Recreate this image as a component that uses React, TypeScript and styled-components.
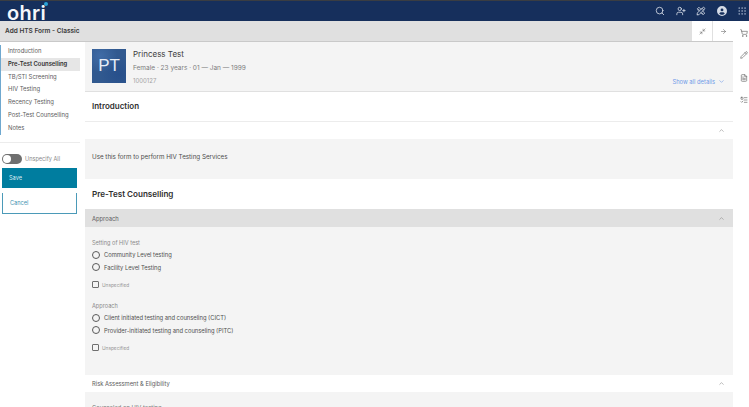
import React from 'react';
import styled, { createGlobalStyle } from 'styled-components';
import {
  ArrowRight,
  ChevronDown,
  ChevronUp,
  FileText,
  Grip,
  ListTodo,
  Minimize2,
  Pencil,
  Search,
  ShoppingCart,
  UserPlus,
} from 'lucide-react';
import { FaCircleUser } from 'react-icons/fa6';
import { TbTools } from 'react-icons/tb';

const GlobalStyle = createGlobalStyle`
  html, body {
    margin: 0;
    padding: 0;
    background: #fff;
    overflow: hidden;
    font-family: 'Inter', 'Liberation Sans', sans-serif;
    color: #393939;
  }
  * { box-sizing: border-box; }
`;

const Page = styled.div`
  width: 749px;
  height: 407px;
  display: flex;
  flex-direction: column;
  overflow: hidden;
`;

const TopBar = styled.header`
  height: 21px;
  flex: none;
  background: #162f5c;
  border-top: 1px solid #3a3d42;
  display: flex;
  align-items: center;
  justify-content: space-between;
  padding: 0 2px 0 7px;
`;

const Logo = styled.div`
  position: relative;
  color: #f4f7fb;
  font-family: 'Inter', sans-serif;
  font-size: 20px;
  font-weight: 600;
  letter-spacing: 0.3px;
  line-height: 24px;
  height: 20px;
  width: 41px;
`;

const LogoDot = styled.span`
  position: absolute;
  right: 0;
  top: 1px;
  width: 4px;
  height: 4px;
  border-radius: 50%;
  background: #2aa3d6;
`;

const TopIcons = styled.nav`
  display: flex;
  align-items: center;
  gap: 10.5px;
  color: #d5dbe6;
`;

const TitleBar = styled.div`
  height: 21px;
  flex: none;
  background: #e0e0e0;
  border-bottom: 1px solid #c9c9c9;
  display: flex;
  align-items: center;
  justify-content: space-between;
  padding-left: 5px;
  margin-right: 16px;
`;

const FormTitle = styled.span`
  font-size: 6.5px;
  font-weight: 600;
  color: #3a3a3a;
`;

const TitleActions = styled.div`
  display: flex;
  height: 100%;
`;

const TitleButton = styled.div`
  width: 20px;
  margin-left: 1px;
  background: #fff;
  color: #6f6f6f;
  display: flex;
  align-items: center;
  justify-content: center;
`;

const Body = styled.div`
  flex: 1;
  min-height: 0;
  display: flex;
`;

const Sidebar = styled.aside`
  width: 85px;
  flex: none;
  padding-top: 3px;
  display: flex;
  flex-direction: column;
`;

const SideLinks = styled.ul`
  list-style: none;
  margin: 0 5px 0 0;
  padding: 0 0 7px;
  border-bottom: 1px solid #ececec;
`;

const SideLink = styled.li<{ $active?: boolean }>`
  height: 12.8px;
  line-height: 12px;
  padding-left: 7px;
  font-size: 5.9px;
  white-space: nowrap;
  border-left: 1px solid #6fa8cf;
  color: ${p => (p.$active ? '#2f2f2f' : '#5c5c5c')};
  font-weight: ${p => (p.$active ? 600 : 400)};
  background: ${p => (p.$active ? '#e6e6e6' : 'transparent')};
`;

const UnspecifyRow = styled.div`
  margin-top: 11px;
  height: 10px;
  padding-left: 2px;
  display: flex;
  align-items: center;
  gap: 3px;
  font-size: 5.6px;
  color: #8a8a8a;
`;

const ToggleTrack = styled.span`
  position: relative;
  width: 20px;
  height: 10px;
  border-radius: 5px;
  background: #6f6f6f;
`;

const ToggleKnob = styled.span`
  position: absolute;
  left: 1px;
  top: 1px;
  width: 8px;
  height: 8px;
  border-radius: 50%;
  background: #fff;
`;

const SaveButton = styled.div`
  margin: 4px 0 0 2px;
  width: 75px;
  height: 20px;
  padding-left: 7px;
  line-height: 20px;
  font-size: 5.6px;
  color: #dcecf2;
  background: #007d9f;
`;

const CancelButton = styled.div`
  margin: 5px 0 0 2px;
  width: 75px;
  height: 21px;
  padding-left: 7px;
  line-height: 20px;
  font-size: 5.6px;
  color: #3f93b0;
  background: #fff;
  border-left: 1px solid #4b9ab8;
  border-right: 1px solid #4b9ab8;
  border-bottom: 1px solid #4b9ab8;
`;

const Main = styled.main`
  width: 648px;
  flex: none;
  display: flex;
  flex-direction: column;
`;

const Banner = styled.section`
  height: 50px;
  flex: none;
  background: #f4f4f4;
  border-bottom: 1px solid #e0e0e0;
  padding: 7px 8px 0 7px;
  display: flex;
  gap: 7px;
  position: relative;
`;

const Avatar = styled.div`
  width: 34px;
  height: 34px;
  flex: none;
  background:
    radial-gradient(circle at 25% 20%, #3f6ba6 0, transparent 45%),
    radial-gradient(circle at 80% 75%, #274f8b 0, transparent 50%),
    #31598f;
  color: #e6edf7;
  font-size: 17px;
  text-align: center;
  line-height: 34px;
  font-family: 'Liberation Sans', sans-serif;
`;

const PatientInfo = styled.div`
  display: flex;
  flex-direction: column;
`;

const PatientName = styled.div`
  font-size: 8px;
  line-height: 11px;
  color: #3d3d3d;
`;

const PatientMeta = styled.div`
  font-size: 6.5px;
  line-height: 8px;
  margin-top: 4px;
  color: #7c7c7c;
`;

const PatientId = styled.div`
  font-size: 6px;
  line-height: 8px;
  margin-top: 5px;
  color: #a3a3a3;
`;

const ShowDetails = styled.div`
  position: absolute;
  right: 8px;
  bottom: 6px;
  display: flex;
  align-items: center;
  gap: 3px;
  font-size: 5.8px;
  color: #6f9ae8;
`;

const SectionTitle = styled.h2<{ $large?: boolean }>`
  margin: 0;
  flex: none;
  height: 30px;
  padding-left: 7px;
  line-height: ${p => (p.$large ? '30px' : '29px')};
  font-size: ${p => (p.$large ? '8.1px' : '8px')};
  font-weight: 600;
  color: #2f2f2f;
  border-bottom: ${p => (p.$large ? 'none' : '1px solid #ececec')};
`;

const AccordionHead = styled.div<{ $shaded?: boolean }>`
  flex: none;
  height: ${p => (p.$shaded ? '18px' : '17px')};
  padding: 0 8px 0 7px;
  display: flex;
  align-items: center;
  justify-content: space-between;
  font-size: 5.8px;
  color: #5c5c5c;
  background: ${p => (p.$shaded ? '#e0e0e0' : '#fff')};
`;

const IntroPanel = styled.div`
  flex: none;
  height: 40px;
  background: #f4f4f4;
  padding-left: 7px;
  line-height: 37px;
  font-size: 6.25px;
  color: #4c4c4c;
`;

const FieldsPanel = styled.div`
  flex: none;
  height: 148px;
  background: #f4f4f4;
  padding: 13px 7px 0;
  display: flex;
  flex-direction: column;
  gap: 14px;
`;

const FieldGroup = styled.fieldset`
  margin: 0;
  padding: 0;
  border: none;
`;

const FieldLabel = styled.div`
  font-size: 5.6px;
  line-height: 7px;
  color: #8a8a8a;
  margin-bottom: 1.5px;
`;

const RadioRow = styled.div`
  height: 12.5px;
  display: flex;
  align-items: center;
  gap: 4px;
  font-size: 5.8px;
  color: #4f4f4f;
`;

const RadioDot = styled.span`
  width: 8px;
  height: 8px;
  border-radius: 50%;
  border: 1px solid #5a5a5a;
  flex: none;
`;

const UnspecifiedRow = styled.div`
  margin-top: 6.5px;
  height: 9px;
  display: flex;
  align-items: center;
  gap: 3px;
  font-size: 4.8px;
  color: #949494;
`;

const CheckBox = styled.span`
  width: 7px;
  height: 7px;
  border: 1px solid #6f6f6f;
  border-radius: 1px;
  flex: none;
`;

const TailPanel = styled.div`
  flex: 1;
  background: #f4f4f4;
  padding: 12px 0 0 7px;
  font-size: 5.8px;
  line-height: 7px;
  color: #7a7a7a;
`;

const RightRail = styled.aside`
  flex: 1;
  margin-top: -13px;
  padding-left: 7px;
  display: flex;
  flex-direction: column;
  gap: 14.3px;
  color: #6a6a6a;
`;

const sections = [
  'Introduction',
  'Pre-Test Counselling',
  'TB/STI Screening',
  'HIV Testing',
  'Recency Testing',
  'Post-Test Counselling',
  'Notes',
];

const Field = ({ label, options }: { label: string; options: string[] }) => (
  <FieldGroup>
    <FieldLabel>{label}</FieldLabel>
    {options.map(option => (
      <RadioRow key={option}>
        <RadioDot />
        {option}
      </RadioRow>
    ))}
    <UnspecifiedRow>
      <CheckBox />
      Unspecified
    </UnspecifiedRow>
  </FieldGroup>
);

export default function App() {
  return (
    <Page>
      <GlobalStyle />
      <TopBar>
        <Logo>
          ohri
          <LogoDot />
        </Logo>
        <TopIcons>
          <Search size={10} />
          <UserPlus size={10} />
          <TbTools size={10} />
          <FaCircleUser size={10} />
          <Grip size={10} color="#8d9cb8" />
        </TopIcons>
      </TopBar>
      <TitleBar>
        <FormTitle>Add HTS Form - Classic</FormTitle>
        <TitleActions>
          <TitleButton>
            <Minimize2 size={7} />
          </TitleButton>
          <TitleButton>
            <ArrowRight size={7} />
          </TitleButton>
        </TitleActions>
      </TitleBar>
      <Body>
        <Sidebar>
          <SideLinks>
            {sections.map(section => (
              <SideLink key={section} $active={section === 'Pre-Test Counselling'}>
                {section}
              </SideLink>
            ))}
          </SideLinks>
          <UnspecifyRow>
            <ToggleTrack>
              <ToggleKnob />
            </ToggleTrack>
            Unspecify All
          </UnspecifyRow>
          <SaveButton>Save</SaveButton>
          <CancelButton>Cancel</CancelButton>
        </Sidebar>
        <Main>
          <Banner>
            <Avatar>PT</Avatar>
            <PatientInfo>
              <PatientName>Princess Test</PatientName>
              <PatientMeta>Female · 23 years · 01 — Jan — 1999</PatientMeta>
              <PatientId>1000127</PatientId>
            </PatientInfo>
            <ShowDetails>
              Show all details
              <ChevronDown size={7} />
            </ShowDetails>
          </Banner>
          <SectionTitle>Introduction</SectionTitle>
          <AccordionHead>
            <span />
            <ChevronUp size={7} color="#8a8a8a" />
          </AccordionHead>
          <IntroPanel>Use this form to perform HIV Testing Services</IntroPanel>
          <SectionTitle $large>Pre-Test Counselling</SectionTitle>
          <AccordionHead $shaded>
            Approach
            <ChevronUp size={7} color="#8a8a8a" />
          </AccordionHead>
          <FieldsPanel>
            <Field label="Setting of HIV test" options={['Community Level testing', 'Facility Level Testing']} />
            <Field
              label="Approach"
              options={['Client initiated testing and counseling (CICT)', 'Provider-initiated testing and counseling (PITC)']}
            />
          </FieldsPanel>
          <AccordionHead>
            Risk Assessment &amp; Eligibility
            <ChevronUp size={7} color="#8a8a8a" />
          </AccordionHead>
          <TailPanel>Counseled on HIV testing</TailPanel>
        </Main>
        <RightRail>
          <ShoppingCart size={8} />
          <Pencil size={8} />
          <FileText size={8} />
          <ListTodo size={8} />
        </RightRail>
      </Body>
    </Page>
  );
}
